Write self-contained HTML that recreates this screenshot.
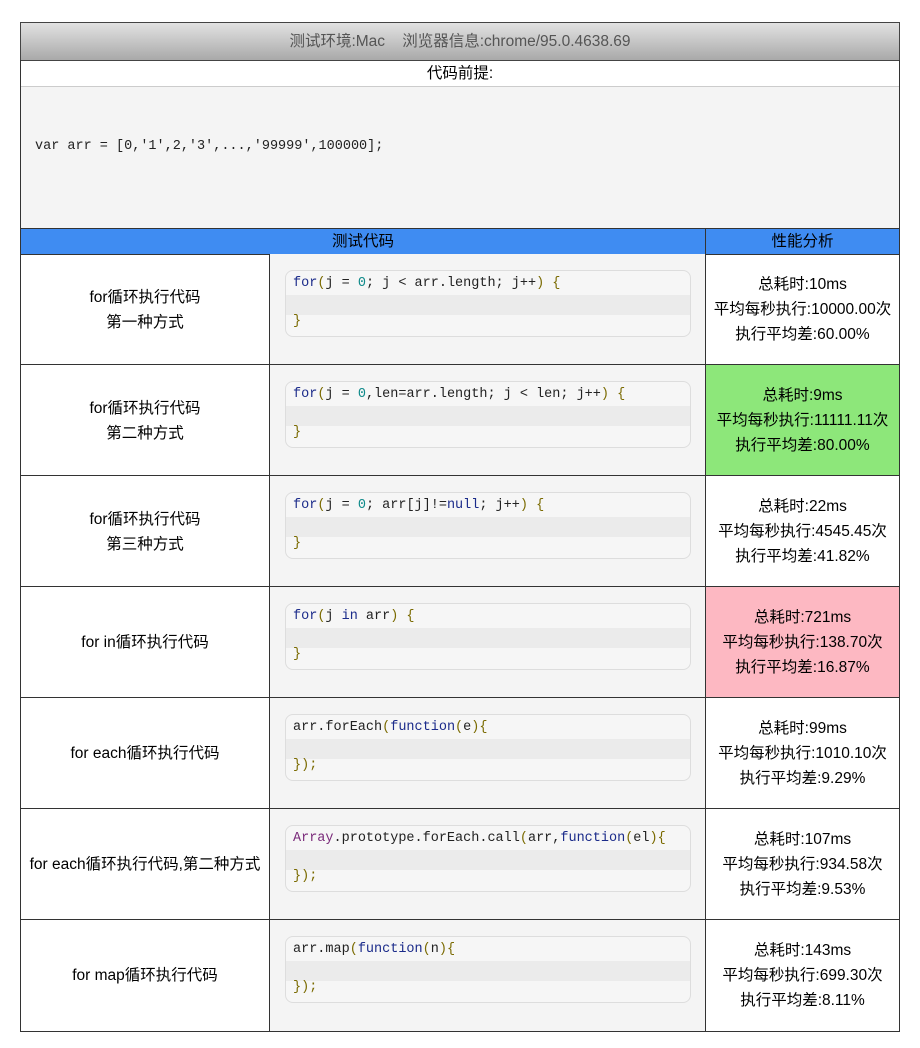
<!DOCTYPE html>
<html><head><meta charset="utf-8"><style>
*{margin:0;padding:0;box-sizing:border-box}
body{width:920px;height:1048px;background:#fff;position:relative;font-family:"Liberation Sans","Noto Sans CJK SC",sans-serif;font-size:15.5px;color:#000;overflow:hidden}
.a{position:absolute}
.hdr{left:20px;top:22px;width:880px;height:39px;background:linear-gradient(#e2e2e2,#a9a9a9);border:1px solid #444;color:#555;text-align:center;line-height:37px;font-size:15.5px}
.c{display:flex;align-items:center;justify-content:center;text-align:center;line-height:25px}
.mono{font-family:"Liberation Mono","DejaVu Sans Mono",monospace;font-size:13.5px;color:#222}
.box{position:absolute;left:15px;top:16px;width:406px;height:67px;border:1px solid #ddd;border-radius:8px;background:#f6f6f6;overflow:hidden}
.box .l1{position:absolute;left:7px;top:5px;white-space:pre}
.box .band{position:absolute;left:0;right:0;top:24px;height:20px;background:#ebebeb}
.box .l3{position:absolute;left:7px;top:43px;white-space:pre}
.k{color:#1b2b8a}.n{color:#0f8a8a}.b{color:#7a6a00}.p{color:#7a2a7a}
</style></head><body>
<div class="a hdr">测试环境:Mac&nbsp;&nbsp;&nbsp;&nbsp;浏览器信息:chrome/95.0.4638.69</div>
<div class="a" style="left:20px;top:60px;width:880px;height:972px;border:1px solid #333;border-top:none"></div>
<div class="a c" style="left:21px;top:60px;width:878px;height:26px">代码前提:</div>
<div class="a mono" style="left:21px;top:86px;width:878px;height:142px;background:#f4f4f4;border-top:1px solid #ccc"><span style="position:absolute;top:51px;left:14px;line-height:18px">var arr = [0,'1',2,'3',...,'99999',100000];</span></div>
<div class="a" style="left:20px;top:228px;width:880px;height:27px;background:#3f8cf2;border:1px solid #333"></div>
<div class="a c" style="left:21px;top:229px;width:684px;height:25px">测试代码</div>
<div class="a" style="left:705px;top:228px;width:1px;height:804px;background:#333"></div>
<div class="a c" style="left:706px;top:229px;width:193px;height:25px">性能分析</div>
<div class="a" style="left:269px;top:254px;width:1px;height:778px;background:#333"></div>

<div id="rows"></div>
<script>
const rows=[
["for循环执行代码<br>第一种方式",'<span class="k">for</span><span class="b">(</span>j = <span class="n">0</span>; j &lt; arr.length; j++<span class="b">) {</span>','<span class="b">}</span>',"总耗时:10ms<br>平均每秒执行:10000.00次<br>执行平均差:60.00%",""],
["for循环执行代码<br>第二种方式",'<span class="k">for</span><span class="b">(</span>j = <span class="n">0</span>,len=arr.length; j &lt; len; j++<span class="b">) {</span>','<span class="b">}</span>',"总耗时:9ms<br>平均每秒执行:11111.11次<br>执行平均差:80.00%","#8de77a"],
["for循环执行代码<br>第三种方式",'<span class="k">for</span><span class="b">(</span>j = <span class="n">0</span>; arr[j]!=<span class="k">null</span>; j++<span class="b">) {</span>','<span class="b">}</span>',"总耗时:22ms<br>平均每秒执行:4545.45次<br>执行平均差:41.82%",""],
["for in循环执行代码",'<span class="k">for</span><span class="b">(</span>j <span class="k">in</span> arr<span class="b">) {</span>','<span class="b">}</span>',"总耗时:721ms<br>平均每秒执行:138.70次<br>执行平均差:16.87%","#fdb8c2"],
["for each循环执行代码",'arr.forEach<span class="b">(</span><span class="k">function</span><span class="b">(</span>e<span class="b">){</span>','<span class="b">});</span>',"总耗时:99ms<br>平均每秒执行:1010.10次<br>执行平均差:9.29%",""],
["for each循环执行代码,第二种方式",'<span class="p">Array</span>.prototype.forEach.call<span class="b">(</span>arr,<span class="k">function</span><span class="b">(</span>el<span class="b">){</span>','<span class="b">});</span>',"总耗时:107ms<br>平均每秒执行:934.58次<br>执行平均差:9.53%",""],
["for map循环执行代码",'arr.map<span class="b">(</span><span class="k">function</span><span class="b">(</span>n<span class="b">){</span>','<span class="b">});</span>',"总耗时:143ms<br>平均每秒执行:699.30次<br>执行平均差:8.11%",""]];
let h="";
rows.forEach((r,i)=>{const t=254+i*111;
h+=`<div class="a c" style="left:21px;top:${t}px;width:248px;height:111px">${r[0]}</div>
<div class="a" style="left:270px;top:${t}px;width:435px;height:111px;background:#f4f4f4"><div class="box mono"><div class="band"></div><div class="l1">${r[1]}</div><div class="l3">${r[2]}</div></div></div>
<div class="a c" style="left:706px;top:${t}px;width:193px;height:111px;${r[4]?'background:'+r[4]:''}">${r[3]}</div>`;
if(i>0)h+=`<div class="a" style="left:20px;top:${t-1}px;width:880px;height:1px;background:#333"></div>`;});
document.getElementById("rows").innerHTML=h;
</script>
</body></html>
